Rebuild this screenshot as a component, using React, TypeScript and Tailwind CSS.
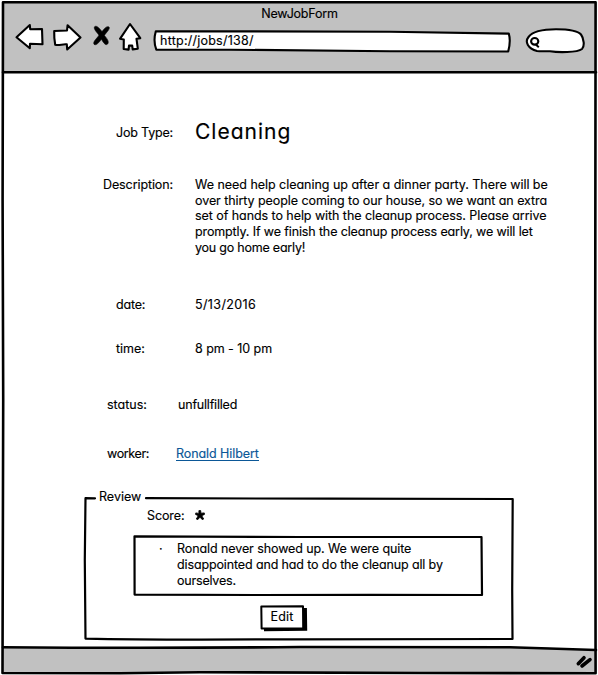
import type { ReactNode } from "react";

function Sketch({ box, children }: { box: string; children: ReactNode }) {
  return (
    <svg
      className="pointer-events-none absolute inset-0 h-full w-full overflow-visible"
      viewBox={box}
      fill="none"
      stroke="#000"
      strokeWidth="2.6"
      strokeLinejoin="round"
      strokeLinecap="round"
    >
      {children}
    </svg>
  );
}

function Row({ className, label, labelClass, children }: { className: string; label: string; labelClass: string; children: ReactNode }) {
  return (
    <div className={`flex items-start whitespace-nowrap ${className}`}>
      <div className={labelClass}>{label}</div>
      {children}
    </div>
  );
}

function Toolbar() {
  return (
    <header className="h-[73px] shrink-0 bg-[#c1c1c1] pt-[6px]">
      <h1 className="pl-px text-center leading-4 font-normal tracking-[-0.22px]">NewJobForm</h1>
      <div className="flex items-start pl-[14px]">
        <svg className="h-8 w-[130px] shrink-0" viewBox="14 22 130 32" stroke="#000" strokeWidth="2.1" strokeLinejoin="round" fill="#fff">
          <path d="M16.5 37.3 29.8 25 30.2 29.2 42 29 42.5 44.2 30 43.8 29.8 48.2Z" />
          <path d="M54.2 31 67 30.5 67.6 25.2 80.5 37.5 67.2 49.5 66.8 44.4C63 43.8 59 45.8 55.2 44.8Q54 38 54.2 31Z" />
          <path d="M130 24 140.3 38.2 136.5 38.8 137.8 48.7 132.7 49.4 132.2 45.6 129 45.6 128.6 49.6 123.7 49 123.8 39.5 120 38.8Z" />
          <path d="M94.5 26.8C96.5 25 99 28 102 31.5C104 29 106.5 25.6 109 27C110.5 28.8 106.5 32.2 104.4 35.4C106.3 37.8 109.7 41.6 107.6 44C105.2 46.3 102.8 41.4 101.4 39.3C99.4 42 96 46.2 94 44.2C92.6 41.6 97.2 38.3 98.9 35.2C97.2 32.4 93.4 29.4 94.5 26.8Z" fill="#000" stroke="#000" strokeWidth="0.6" />
        </svg>
        <div className="relative mt-2 ml-[10px] h-[22px] w-[357px]">
          <Sketch box="154 30 357 22">
            <path d="M155.8 31.2 Q300 31.5 390 31.7 L508.8 33.6 Q511 41 508.2 51.5 L390 51.2 Q300 50.7 230 49.7 L156.3 49.6 Q153 41 155.8 31.2Z" fill="#fff" strokeWidth="2.1" />
          </Sketch>
          <span className="relative block pt-[3px] pl-[6px] leading-4 tracking-[0.24px]">http://jobs/138/</span>
        </div>
        <svg className="mt-[6px] ml-[14px] h-[26px] w-[61px] shrink-0" viewBox="525 28 61 26" fill="none" stroke="#000" strokeWidth="2.1">
          <path d="M537 51C528 48.5 524.5 42 528.5 37C533 31 543 29.3 556 29.3C568 29.3 578 31 581 34.5C584 38.5 584.8 46.5 582 49C577 52.8 558 52.5 550 51.3C545 51 541 51.4 537 51Z" fill="#fff" />
          <ellipse cx="534.7" cy="41.3" rx="3.6" ry="3.3" />
          <path d="M535.8 44.6 538.8 47.2" strokeWidth="2" />
        </svg>
      </div>
    </header>
  );
}

function Review() {
  return (
    <section className="relative mt-[36px] ml-[84px] h-[141px] w-[430px]">
      <Sketch box="84 498 430 141">
        <path d="M95 498.3 L85.5 498.2 L84.8 560 L85.5 638.6 Q150 640.1 290 639.3 L512.5 639 L512.2 590 L512.7 499 L330 498.7 L146 498.2" strokeWidth="2.2" />
      </Sketch>
      <h2 className="ml-[15px] -translate-y-[9px] leading-4 font-normal">Review</h2>
      <div className="-mt-[6px] ml-[63px] flex h-4 items-center gap-[11px] leading-4">
        <span className="tracking-[-0.1px]">Score:</span>
        <svg className="-mt-[2px] h-[10px] w-[10px]" viewBox="0 0 10 10" stroke="#000" strokeWidth="0.8" strokeLinejoin="round">
          <path d="M3.9 0.6 5.7 0.6 5.9 3.2 9.3 2.9 9.5 4.4 6.8 5.7 8.7 9 7.3 9.7 5 7.2 2.7 9.7 1.3 9 3.2 5.7 0.5 4.4 0.8 2.9 3.9 3.4Z" fill="#000" />
        </svg>
      </div>
      <div className="relative mt-[12px] ml-[49px] flex h-[60px] w-[350px] pt-[5px] leading-[16px]">
        <Sketch box="133 536 350 60">
          <path d="M134.5 536.3 Q220 536.7 300 537 L481.5 537 L482 595 L370 594.8 L260 595 L134.6 594.6 Z" fill="#fff" strokeWidth="2.2" />
        </Sketch>
        <span className="relative w-[44px] pl-[26px]">·</span>
        <p className="relative whitespace-nowrap">
          <span className="block tracking-[-0.09px]">Ronald never showed up. We were quite</span>
          <span className="block tracking-[-0.13px]">disappointed and had to do the cleanup all by</span>
          <span className="block tracking-[-0.2px]">ourselves.</span>
        </p>
      </div>
      <button className="relative mt-[9px] ml-[176px] block h-[26px] w-[47px] pb-[3px] pr-[3px] leading-4 tracking-[0.2px]">
        <Sketch box="260 605 47 26">
          <path d="M264 629.5 305.5 629 305.2 608" strokeWidth="3.4" strokeLinecap="butt" strokeLinejoin="miter" />
          <path d="M261.3 606.5 303 606.2 303.2 628.3 261.6 628.5Z" fill="#fff" strokeWidth="2" />
        </Sketch>
        <span className="relative">Edit</span>
      </button>
    </section>
  );
}

export default function App() {
  return (
    <div className="relative flex h-[675px] w-[598px] flex-col overflow-hidden bg-white text-[12.5px] text-black [-webkit-text-stroke:0.15px] [font-family:Inter,'Open_Sans',sans-serif] [font-feature-settings:'cv11','calt'_0]">
      <Toolbar />
      <main className="h-[574px] shrink-0">
        <Row className="h-[71px] pt-[47px]" label="Job Type:" labelClass="mt-[5px] ml-[116px] w-[79px] leading-4 tracking-[-0.18px]">
          <div className="text-[21px] leading-6 tracking-[1px]">Cleaning</div>
        </Row>
        <Row className="mt-[33px] leading-[15.7px]" label="Description:" labelClass="ml-[103px] w-[92px] tracking-[-0.1px]">
          <p>
            <span className="block tracking-[-0.03px]">We need help cleaning up after a dinner party. There will be</span>
            <span className="block tracking-[-0.07px]">over thirty people coming to our house, so we want an extra</span>
            <span className="block tracking-[-0.06px]">set of hands to help with the cleanup process. Please arrive</span>
            <span className="block tracking-[-0.13px]">promptly. If we finish the cleanup process early, we will let</span>
            <span className="block tracking-[-0.22px]">you go home early!</span>
          </p>
        </Row>
        <Row className="mt-[41.5px] leading-4" label="date:" labelClass="ml-[116px] w-[79px] tracking-[-0.2px]">
          <span className="tracking-[0.37px]">5/13/2016</span>
        </Row>
        <Row className="mt-[28px] leading-4" label="time:" labelClass="ml-[116px] w-[79px]">
          <span className="tracking-[-0.05px]">8 pm - 10 pm</span>
        </Row>
        <Row className="mt-[40px] leading-4" label="status:" labelClass="ml-[107px] w-[71px]">
          <span className="tracking-[-0.2px]">unfullfilled</span>
        </Row>
        <Row className="mt-[33px] leading-4" label="worker:" labelClass="ml-[107px] w-[69px] tracking-[-0.35px]">
          <a href="#worker" className="h-[15px] border-b border-[#0b5797] tracking-[-0.08px] text-[#0b5797]">Ronald Hilbert</a>
        </Row>
        <Review />
      </main>
      <footer className="h-7 shrink-0 bg-[#c1c1c1]" />
      <Sketch box="0 0 598 675">
        <path d="M510 646 L596 646 L596 650Z" fill="#fff" stroke="none" />
        <path d="M0 0H598V675H0Z M3 2.5V673H596V2.5Z" fill="#fff" fillRule="evenodd" stroke="none" />
        <path d="M3 2.3H595.6L595.2 340L595.6 673.2L420 673L200 672.2L120 673.2L2.5 673L3.2 400L2.6 200Z" />
        <path d="M3 72.2 Q300 73 596 72.2M3 647.2 Q150 648.5 300 647 L510 647.2 L596 650" />
        <path d="M578.3 663.7 584 657.7M582 666 590 659.7" strokeWidth="3.6" />
      </Sketch>
    </div>
  );
}
